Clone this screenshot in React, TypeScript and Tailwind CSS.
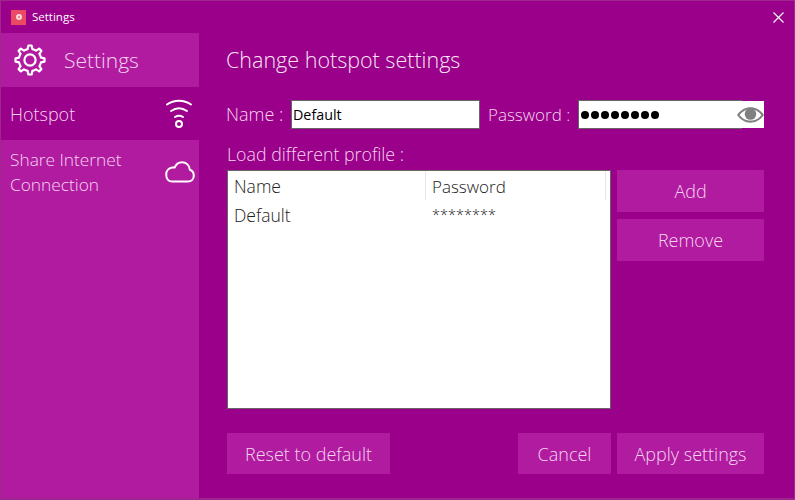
import React from "react";

const font = "font-['Open_Sans','Noto_Sans',sans-serif] font-light";

function gearPath() {
  const c = 16;
  const pts: string[] = [];
  const n = 8;
  const outer = 14.6;
  const inner = 11.2;
  for (let i = 0; i < n; i++) {
    const a = (i * 2 * Math.PI) / n - Math.PI / 2;
    const step = (2 * Math.PI) / n;
    const p = (r: number, t: number) => `${(c + r * Math.cos(t)).toFixed(2)} ${(c + r * Math.sin(t)).toFixed(2)}`;
    pts.push(`${i === 0 ? "M" : "L"}${p(inner, a - step * 0.27)}`);
    pts.push(`L${p(outer, a - step * 0.14)}`);
    pts.push(`L${p(outer, a + step * 0.14)}`);
    pts.push(`L${p(inner, a + step * 0.27)}`);
    pts.push(`A${inner} ${inner} 0 0 1 ${p(inner, a + step * 0.73)}`);
  }
  return pts.join(" ") + " Z";
}

function Gear() {
  return (
    <svg width="32" height="32" viewBox="0 0 32 32" fill="none" stroke="white" strokeWidth="2.2" strokeLinejoin="round">
      <circle cx="16" cy="16" r="5.6" />
      <path d={gearPath()} />
    </svg>
  );
}

function Wifi() {
  return (
    <svg width="28" height="32" viewBox="0 0 28 32" fill="none" stroke="white" strokeWidth="2" strokeLinecap="round">
      <path d="M2 6.5 C9 1.5 19 1.5 26 6.5" />
      <path d="M6 13 C11 9.5 17 9.5 22 13" />
      <path d="M10 19 C12.5 17.4 15.5 17.4 18 19" />
      <circle cx="14" cy="26" r="3" />
    </svg>
  );
}

function Cloud() {
  return (
    <svg width="30" height="22" viewBox="0 0 30 22" fill="none" stroke="white" strokeWidth="2" strokeLinejoin="round">
      <path d="M7 20.5 H23 C26.5 20.5 28.8 17.8 28.8 14.5 C28.8 11.5 27 9.5 24.8 8.7 C24.3 4.2 21 1.2 17 1.2 C13.3 1.2 10.8 3.4 9.6 6.6 C8.8 6.4 8 6.4 7 6.6 C3.6 7.2 1.2 10 1.2 13.5 C1.2 17.5 3.6 20.5 7 20.5 Z" />
    </svg>
  );
}

function Eye() {
  return (
    <svg width="28" height="20" viewBox="0 0 28 20" fill="#808080">
      <path d="M0 10 C4 4.5 9 2 14 2 C19 2 24 4.5 28 10 C24 15.5 19 18 14 18 C9 18 4 15.5 0 10 Z M2.6 10 C6 14 9 15.8 14 15.8 C19 15.8 22 14 25.4 10 C22 6 19 4.2 14 4.2 C9 4.2 6 6 2.6 10 Z" fillRule="evenodd" />
      <circle cx="14" cy="9" r="6" />
    </svg>
  );
}

function Btn({ className, children }: { className: string; children: React.ReactNode }) {
  return (
    <div className={`flex items-center justify-center whitespace-nowrap bg-[#b11ba0] text-[18px] text-[#f4d4ef] ${className}`}>
      {children}
    </div>
  );
}

export default function App() {
  return (
    <div className={`${font} flex h-[500px] w-[795px] flex-col overflow-hidden border border-b-2 border-[#a0268f] bg-[#9a0089] text-white`}>
      <div className="flex h-[32px] items-center">
        <div className="ml-[10px] flex h-[15px] w-[15px] items-center justify-center bg-[#ec4a62]">
          <div className="h-[6px] w-[6px] rounded-full border-[2px] border-[#f8d8dc] bg-[#f06a7e]" />
        </div>
        <span className="ml-[6px] text-[11.5px] font-normal">Settings</span>
        <svg className="ml-auto mr-[10px]" width="11" height="11" viewBox="0 0 11 11" stroke="white" strokeWidth="1.1">
          <path d="M0.5 0.5 L10.5 10.5 M10.5 0.5 L0.5 10.5" />
        </svg>
      </div>
      <div className="flex min-h-0 flex-1">
        <div className="flex w-[198px] flex-col bg-[#b11ba0]">
          <div className="flex h-[54px] items-center pl-[13px]">
            <Gear />
            <span className="ml-[18px] pt-[2px] text-[21px] text-[#f4d4ef]">Settings</span>
          </div>
          <div className="flex h-[53px] items-center justify-between bg-[#9a0089] pl-[9px] pr-[6px]">
            <span className="pt-[2px] text-[18px] text-[#f4d4ef]">Hotspot</span>
            <Wifi />
          </div>
          <div className="flex h-[64px] items-center justify-between pl-[9px] pr-[4px]">
            <span className="text-[17.3px] leading-[25px] text-[#f4d4ef]">
              Share Internet
              <br />
              Connection
            </span>
            <Cloud />
          </div>
        </div>
        <div className="flex min-w-0 flex-1 flex-col pl-[28px] pr-[30px]">
          <div className="flex h-[54px] items-center">
            <h1 className="-ml-[1px] text-[21.5px] font-light text-[#f8e4f5]">Change hotspot settings</h1>
          </div>
          <div className="mt-[13px] flex items-center">
            <span className="-ml-[1px] w-[65px] whitespace-nowrap text-[18px] leading-[29px] text-[#f4d4ef]">Name :</span>
            <div className="flex h-[29px] w-[189px] items-center border border-[#666] bg-white pl-[1px] text-[14.3px] font-normal text-black">
              Default
            </div>
            <span className="ml-[8px] w-[90px] whitespace-nowrap text-[17px] leading-[29px] text-[#f4d4ef]">Password :</span>
            <div className="flex h-[29px] w-[186px] items-center">
              <div className="flex h-[29px] w-[164px] items-center border-y border-l border-[#666] bg-white pl-[2px]">
                <span className="flex gap-[2px]">
                  {[0, 1, 2, 3, 4, 5, 7, 8].map((i) => (
                    <span key={i} className="h-[8px] w-[8px] rounded-full bg-black" />
                  ))}
                </span>
              </div>
              <div className="-ml-[5px] flex h-[27px] w-[27px] items-center justify-center bg-white">
                <Eye />
              </div>
            </div>
          </div>
          <div className="mt-[11px] text-[17.8px] leading-[28px] text-[#f4d4ef]">Load different profile :</div>
          <div className="mt-[2px] flex gap-[6px]">
            <div className="h-[239px] w-[384px] border border-[#666] bg-white text-[17.5px] text-[#222]">
              <div className="flex h-[29px] items-center">
                <span className="flex h-full w-[198px] items-center border-r border-[#e5e5e5] pl-[6px] pt-[2px]">Name</span>
                <span className="flex h-full w-[180px] items-center border-r border-[#e5e5e5] pl-[6px] pt-[2px] text-[17px]">Password</span>
              </div>
              <div className="flex h-[30px] items-center">
                <span className="w-[198px] pl-[6px]">Default</span>
                <span className="pl-[6px] text-[14.5px]">********</span>
              </div>
            </div>
            <div className="flex flex-1 flex-col gap-[7px]">
              <Btn className="h-[42px]">Add</Btn>
              <Btn className="h-[42px]">Remove</Btn>
            </div>
          </div>
          <div className="mt-[24px] flex">
            <Btn className="h-[41px] w-[163px] pt-[2px]">Reset to default</Btn>
            <Btn className="ml-auto h-[41px] w-[93px] pt-[2px]">Cancel</Btn>
            <Btn className="ml-[6px] h-[41px] w-[147px] pt-[2px]">Apply settings</Btn>
          </div>
        </div>
      </div>
    </div>
  );
}
